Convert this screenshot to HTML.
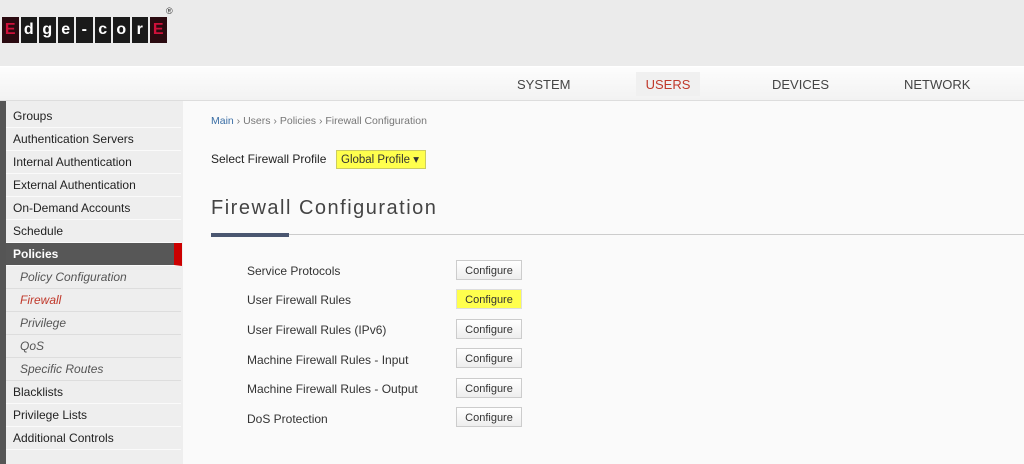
<!DOCTYPE html>
<html><head><style>
body{margin:0;width:1024px;height:464px;overflow:hidden;background:#f8f8f8;font-family:"Liberation Sans",sans-serif;position:relative}
.hdr{position:absolute;left:0;top:0;width:1024px;height:66px;background:#ebebeb}
.logo{position:absolute;left:2px;top:17px;display:flex;gap:2px}
.logo span{width:16.5px;height:26px;background:#1a1a1a;color:#fff;font:bold 16px "Liberation Sans",sans-serif;display:flex;align-items:center;justify-content:center}
.logo span.r{color:#d0103a;background:#2a0a10}
.reg{position:absolute;left:166px;top:6px;font-size:9px;color:#333}
.nav{position:absolute;left:0;top:66px;width:1024px;height:35px;background:linear-gradient(#fdfdfd,#f2f2f2);border-top:1px solid #fff;border-bottom:1px solid #ddd;box-sizing:border-box}
.nav div{position:absolute;top:10px;font-size:13px;color:#444}
.side{position:absolute;left:0;top:101px;width:183px;height:363px;background:#eeeeee;border-left:6px solid #555;box-sizing:border-box;padding-top:4px}
.side div{height:23px;border-bottom:1px solid #fafafa;width:175px;font-size:12px;color:#222;line-height:22px;padding-left:7px;box-sizing:border-box}
.side div.sub{font-style:italic;color:#555;padding-left:14px;border-bottom:1px solid #ddd}
.side div.act{background:#575757;color:#fff;font-weight:bold;border-right:8px solid #c00;width:176px}
.main{position:absolute;left:183px;top:101px;width:841px;height:363px;background:#fafafa}
.bc{position:absolute;left:28px;top:14px;font-size:10.5px;color:#777}
.bc b{color:#3a6ea5;font-weight:normal}
.sel{position:absolute;left:28px;top:51px;font-size:12px;color:#222}
.dd{position:absolute;left:153px;top:49px;width:90px;height:19px;background:#ffff4d;border:1px solid #cccc60;font-size:11.5px;line-height:19px;padding-left:4px;box-sizing:border-box;color:#333}
h1{position:absolute;left:28px;top:96px;margin:0;font-weight:normal;font-size:20px;letter-spacing:1.5px;color:#444}
.ln{position:absolute;left:28px;top:133px;width:813px;height:1px;background:#ccc}
.ln2{position:absolute;left:28px;top:132px;width:78px;height:4px;background:#4a5670}
.row{position:absolute;left:64px;font-size:12px;color:#333}
.btn{position:absolute;left:273px;width:66px;height:20px;border:1px solid #ccc;background:linear-gradient(#fff,#eee);font-size:11px;color:#333;text-align:center;line-height:20px;box-sizing:border-box}
</style></head><body>
<div class="hdr"><div class="logo"><span class="r">E</span><span>d</span><span>g</span><span>e</span><span>-</span><span>c</span><span>o</span><span>r</span><span class="r">E</span></div><div class="reg">®</div></div>
<div class="nav">
<div style="left:517px">SYSTEM</div>
<div style="left:636px;top:5px;height:24px;width:64px;background:#f0f0f0;color:#c0392b;text-align:center;line-height:26px">USERS</div>
<div style="left:772px">DEVICES</div>
<div style="left:904px">NETWORK</div>
</div>
<div class="side">
<div>Groups</div><div>Authentication Servers</div><div>Internal Authentication</div><div>External Authentication</div><div>On-Demand Accounts</div><div>Schedule</div>
<div class="act">Policies</div>
<div class="sub">Policy Configuration</div><div class="sub" style="color:#c0392b">Firewall</div><div class="sub">Privilege</div><div class="sub">QoS</div><div class="sub">Specific Routes</div>
<div>Blacklists</div><div>Privilege Lists</div><div>Additional Controls</div>
</div>
<div class="main">
<div class="bc"><b>Main</b> › Users › Policies › Firewall Configuration</div>
<div class="sel">Select Firewall Profile</div>
<div class="dd">Global Profile ▾</div>
<h1>Firewall Configuration</h1>
<div class="ln"></div><div class="ln2"></div>
<div class="row" style="top:163px">Service Protocols</div><div class="btn" style="top:159px">Configure</div>
<div class="row" style="top:192px">User Firewall Rules</div><div class="btn" style="top:188px;background:#ffff4d;border-color:#ddd">Configure</div>
<div class="row" style="top:222px">User Firewall Rules (IPv6)</div><div class="btn" style="top:218px">Configure</div>
<div class="row" style="top:252px">Machine Firewall Rules - Input</div><div class="btn" style="top:247px">Configure</div>
<div class="row" style="top:281px">Machine Firewall Rules - Output</div><div class="btn" style="top:277px">Configure</div>
<div class="row" style="top:311px">DoS Protection</div><div class="btn" style="top:306px">Configure</div>
</div>
</body></html>
